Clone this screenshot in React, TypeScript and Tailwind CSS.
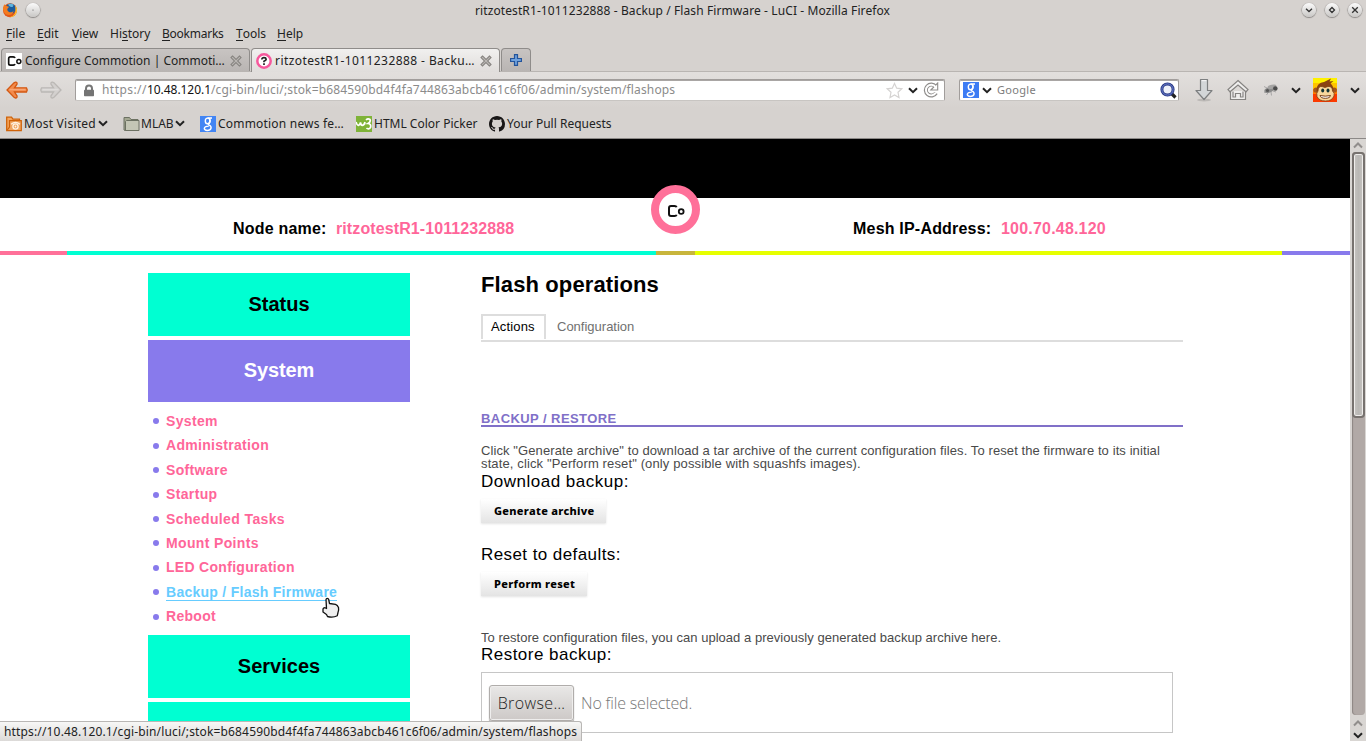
import React from 'react';

type Kids = { children: React.ReactNode };

const Chevron = ({ className = '' }: { className?: string }) => (
  <svg viewBox="0 0 10 7" className={`h-[7px] w-[10px] shrink-0 ${className}`} fill="none" stroke="#222" strokeWidth="2">
    <path d="M1 1.2 5 5.2 9 1.2" />
  </svg>
);

const Firefox = () => (
  <svg viewBox="0 0 16 16" className="size-4 shrink-0">
    <circle cx="8" cy="8.3" r="7" fill="#e2571a" />
    <circle cx="8.6" cy="6.6" r="5.2" fill="#1d5c9c" />
    <path d="M6 2.5c2-1.4 5-1 6.500 1-1.500-.5-2 .3-1.500 1.500-2 .3-3.500-.500-5-2.500z" fill="#5eb4de" />
    <path d="M1 6c.3-2 1-3 1.800-3.700.2 1 .8 1.500 1.600 1.700l2 .6c.8.400.300 1.200-.6 1.700C5 6.800 5 9 7 10c2 .8 3.500 0 4.500-1.300-.3 3-2 4.300-4.500 4.300C3 13 .8 9.500 1 6z" fill="#f47c20" />
    <path d="M13.300 3.500c2 2.500 2.300 6 .5 8.700-1.500 2.200-4 3.200-6.300 3 3.500-.8 6.200-3 6-7.200 0-1.600-.1-3-.2-4.500z" fill="#fdc830" />
  </svg>
);

const WindowButton = ({ children }: { children?: React.ReactNode }) => (
  <span className="flex size-[14px] items-center justify-center rounded-full bg-linear-to-b from-[#fbfbfb] to-[#c9c7c5] shadow-[0_0.5px_1px_0.5px_#8b8886]">
    <svg viewBox="0 0 14 14" className="size-[14px]" fill="none" stroke="#333" strokeWidth="1.300">{children}</svg>
  </span>
);

const Menu = ({ label, className }: { label: string; className: string }) => (
  <span className={className}>
    <span className="inline-block border-b border-[#222] leading-[12px]">{label[0]}</span>{label.slice(1)}
  </span>
);

const CommotionMark = ({ className = '' }: { className?: string }) => (
  <svg viewBox="0 0 18 14" className={className} fill="none" stroke="#111">
    <path d="M9.600 3.300Q9.200 2 7.500 2H4Q2 2 2 4V10Q2 12 4 12H7.500Q9.200 12 9.600 10.700" strokeWidth="2" />
    <circle cx="14.200" cy="7.500" r="2.400" strokeWidth="1.800" />
  </svg>
);

const TabClose = () => (
  <svg viewBox="0 0 12 12" className="size-3 shrink-0" fill="none">
    <path d="M2.500 2.500l7 7M9.500 2.500l-7 7" stroke="#85827f" strokeWidth="3.200" strokeLinecap="square" />
    <path d="M2.500 2.500l7 7M9.500 2.500l-7 7" stroke="#b8b5b2" strokeWidth="1.200" strokeLinecap="square" />
  </svg>
);

const HelpRing = () => (
  <svg viewBox="0 0 16 16" className="size-4 shrink-0" fill="none">
    <circle cx="8" cy="8" r="6.700" fill="#fff" stroke="#f6589c" strokeWidth="2.500" />
    <path d="M5.800 6.500Q6 4.700 8 4.700T10.200 6.300Q10.200 7.300 8 8.200V9.300M8 10.300V11.900" stroke="#222" strokeWidth="1.700" />
  </svg>
);

const BackArrow = ({ off }: { off?: boolean }) => (
  <svg viewBox="0 0 24 20" className={off ? 'h-5 w-6 -scale-x-100' : 'h-5 w-6'}>
    <path d="M10.500 2.200 Q12.500 2 12 4.200L9.500 7.800H21.500Q23 10 21.500 12H9.500L12 15.800Q12.500 18 10.500 18L9 17.300 2 10 9 2.800Z"
      fill={off ? '#d3d0ce' : '#f38b4c'} stroke={off ? '#bbb8b5' : '#d35812'} strokeWidth="1.300" />
    <path d="M4.500 9.600H20.500" stroke={off ? '#dedcda' : '#f7a677'} strokeWidth="1.500" />
  </svg>
);

const GoogleG = ({ className }: { className: string }) => (
  <svg viewBox="0 0 16 16" className={`size-4 shrink-0 ${className}`} fill="none" stroke="#fff">
    <ellipse cx="7.600" cy="4.900" rx="2.300" ry="2.800" strokeWidth="1.400" />
    <path d="M7.500 2H12M9.500 2.500Q11 5 9 7.200 7.500 8.400 9.300 9.200 11.500 10.300 11 12.300 10.300 14.500 7.300 14.500 4.300 14.300 4.300 12.300 4.500 10.200 8.800 10.100" strokeWidth="1.400" />
  </svg>
);

const Folder = () => (
  <svg viewBox="0 0 17 16" className="h-4 w-[17px] shrink-0" stroke="#6c7162">
    <path d="M1 14V1.500H6.500L8 3.500H15V14.500H2Z" fill="#a3a791" />
    <path d="M3.500 4.500H16V14.500H2.500V5.500Z" fill="#c4c6b5" />
  </svg>
);

const RssFolder = () => (
  <svg viewBox="0 0 16 16" className="size-4 shrink-0" fill="none" stroke="#cf6208">
    <path d="M.7 14.700V1.200H5.500L7 3.200H13.500V5" fill="#f5a55c" strokeWidth="1.300" />
    <path d="M3.500 4.700H15.300V14.700H.7L3.500 11Z" fill="#f0a45f" strokeWidth="1.200" />
    <path d="M5 8.200Q9.500 4.500 14 8.200" stroke="#fff2e2" strokeWidth="1.200" />
    <circle cx="9.500" cy="10.500" r="2.600" stroke="#fff2e2" strokeWidth="1.300" />
    <circle cx="9.500" cy="10.500" r=".9" fill="#fff2e2" stroke="none" />
  </svg>
);

const W3 = () => (
  <svg viewBox="0 0 16 16" className="size-4 shrink-0" fill="none">
    <rect width="16" height="16" fill="#7fb338" />
    <path d="M0 6Q1 9.500 2.500 9.300 4 9 4.500 6.500 5 9.500 6.500 9.300 8.500 9 9 6M10 4Q12 2 14 3.500 15 6 12 7.500 15.500 8 14.500 11.500 12.500 14 10.500 12" stroke="#fff" strokeWidth="1.700" />
  </svg>
);

const Github = () => (
  <svg viewBox="0 0 16 16" className="size-4 shrink-0" fill="#191717">
    <path d="M8 0C3.580 0 0 3.580 0 8c0 3.540 2.290 6.530 5.470 7.590.4.070.55-.17.55-.38v-1.490C4 14.090 3.480 13.220 3.320 12.770c-.09-.23-.48-.94-.82-1.130-.28-.15-.68-.52-.01-.53.63-.01 1.080.58 1.230.82.72 1.210 1.870.87 2.330.66.07-.52.280-.87.510-1.070-1.780-.2-3.640-.89-3.640-3.950 0-.87.310-1.590.82-2.150-.08-.2-.36-1.020.08-2.120 0 0 .67-.21 2.200.82a7.600 7.600 0 0 1 4 0c1.530-1.040 2.200-.82 2.200-.82.440 1.100.160 1.920.080 2.120.510.560.820 1.270.820 2.150 0 3.070-1.870 3.750-3.650 3.950.29.250.540.730.540 1.480v2.200c0 .21.150.46.550.38A8 8 0 0 0 16 8c0-4.420-3.580-8-8-8z" />
  </svg>
);

const Padlock = () => (
  <svg viewBox="0 0 12 13" className="h-[13px] w-3 shrink-0">
    <path d="M3 7V4.500Q3 1.500 6 1.500T9 4.500V7" fill="none" stroke="#777" strokeWidth="2" />
    <rect x="1" y="5.800" width="10" height="6.400" rx=".7" fill="#747474" />
  </svg>
);

const Star = () => (
  <svg viewBox="0 0 17 17" className="size-[17px]" fill="#fff" stroke="#d5d3d2" strokeWidth="1.200">
    <path d="M8.500 1.500 10.700 6.200 15.800 6.800 12 10.300 13 15.500 8.500 13 4 15.500 5 10.300 1.200 6.800 6.300 6.200Z" />
  </svg>
);

const Reload = () => (
  <svg viewBox="0 0 16 16" className="size-4" fill="none">
    <path d="M12.500 4.500A5.500 5.500 0 1 0 13 11" stroke="#8f8d8b" strokeWidth="4" />
    <path d="M14.700 1V8H7.800Z" fill="#fff" stroke="#8f8d8b" strokeWidth="1.100" />
    <path d="M12.500 4.900A5.300 5.300 0 1 0 12.800 10.800" stroke="#fff" strokeWidth="1.900" />
  </svg>
);

const Magnifier = () => (
  <svg viewBox="0 0 17 17" className="size-[17px]" fill="none">
    <path d="M11 11l4.500 4.500" stroke="#222" strokeWidth="3.200" />
    <circle cx="7.500" cy="7.500" r="5.600" fill="#eef1fa" stroke="#2b3a86" strokeWidth="3" />
    <circle cx="7.500" cy="7.500" r="5.600" stroke="#6d81cf" strokeWidth="1" />
  </svg>
);

const DownArrow = () => (
  <svg viewBox="0 0 20 24" className="h-6 w-5">
    <ellipse cx="10" cy="22" rx="7" ry="1.500" fill="#bcb9b6" />
    <path d="M6.500 1.500H13.500V12.500H18L10 21.500 2 12.500H6.500Z" fill="#d3d6d8" stroke="#7d7f80" strokeWidth="1.200" strokeLinejoin="round" />
    <path d="M7.700 2.700H12.300" stroke="#fafafa" />
  </svg>
);

const House = () => (
  <svg viewBox="0 0 22 22" className="size-[22px]" fill="#efeeed" stroke="#858381" strokeWidth="1.200">
    <path d="M3.500 12V20.500H18.500V12" />
    <path d="M11 1.500 21 10.500 19 12.800 11 6 3 12.800 1 10.500Z" />
    <path d="M6 12.500V18H8.500V14.500H13.500V18H16V12.500" fill="none" />
  </svg>
);

const Fly = () => (
  <svg viewBox="0 0 17 14" className="h-[14px] w-[17px]">
    <path d="M2 3.500 5 5M2 9.500 5 8M4.500 12 6.500 9M9.500 12.500 9 9M14 9 11 8" stroke="#999" strokeWidth=".8" fill="none" />
    <ellipse cx="7" cy="7" rx="4.800" ry="2.600" fill="#8b8b8b" transform="rotate(-20 7 7)" />
    <ellipse cx="10" cy="3.800" rx="4.500" ry="2" fill="#a5a4a3" transform="rotate(-12 10 3.800)" />
    <circle cx="13.300" cy="5.500" r="2.300" fill="#4c4c4c" />
    <circle cx="5.500" cy="7.500" r="1.600" fill="#555" />
  </svg>
);

const Monkey = () => (
  <svg viewBox="0 0 24 24" className="size-6">
    <rect width="24" height="24" fill="#fff100" />
    <rect y="5" width="24" height="19" fill="#ffc400" />
    <rect y="11" width="24" height="13" fill="#ff7a00" />
    <rect y="16" width="24" height="8" fill="#fb3a00" />
    <circle cx="3" cy="12" r="2.600" fill="#a5561c" />
    <circle cx="21.300" cy="12" r="2.600" fill="#a5561c" />
    <path d="M3.500 11Q4 5 11 4L18 .5 16.500 3.500 20.500 3 17.500 5.500Q21 8 20.500 14 20 21 12 21T3.500 13Z" fill="#8a4312" />
    <path d="M5 13Q5 8 9 8.500L12 9.500 15 8.500Q19.500 8 19.500 13 22 15 21 18 19 23 12.500 23T4 18.500Q3 15 5 13Z" fill="#f8d79c" stroke="#7a3d0f" strokeWidth=".8" />
    <ellipse cx="9.700" cy="12.500" rx="1.500" ry="2.100" fill="#133" />
    <ellipse cx="15" cy="12.500" rx="1.500" ry="2.100" fill="#133" />
    <path d="M7 17.500Q12.300 18.800 17.500 17.500 17 20.300 12.300 20.300T7 17.500Z" fill="#fff" stroke="#6a300c" strokeWidth=".9" />
  </svg>
);

const PointerHand = () => (
  <svg viewBox="0 0 20 22" className="h-[22px] w-5">
    <path d="M5 2.500Q5.200 1.300 6.300 1.300T7.700 2.500L8.500 6.500 14.500 7.300Q16.500 8 17.500 10.500 18 13 17 15.500L16.300 18.700Q12 21 6.500 19.500L5.500 17.500 2 15V12Q2.300 11 4 10.700L5.500 11.500Z"
      fill="#efefef" stroke="#111" strokeWidth="1.300" strokeLinejoin="round" />
  </svg>
);

const Bookmark = ({ children }: Kids) => <div className="flex items-center whitespace-nowrap">{children}</div>;

const subpages: [string, string][] = [
  ['System', 'tracking-[0.35px]'],
  ['Administration', 'tracking-[0.3px]'],
  ['Software', 'tracking-[0.35px]'],
  ['Startup', 'tracking-[0.35px]'],
  ['Scheduled Tasks', 'tracking-[0.38px]'],
  ['Mount Points', 'tracking-[0.35px]'],
  ['LED Configuration', 'tracking-[0.3px]'],
  ['Backup / Flash Firmware', 'tracking-[0.27px]'],
  ['Reboot', 'tracking-[0.3px]'],
];

const Chrome = () => (
  <header className="flex h-[139px] shrink-0 flex-col border-b border-[#8c8987] bg-[#d6d2cf] text-[12px] leading-4 text-[#222]">
    <div className="flex h-[22px] shrink-0 items-center pr-1 pl-[2px]">
      <div className="flex w-[473px] items-center gap-2 pb-[2px]">
        <Firefox />
        <WindowButton><circle cx="7" cy="7" r=".6" fill="#555" stroke="none" /></WindowButton>
      </div>
      <h1 className="flex-1 tracking-[0.1px] whitespace-nowrap">ritzotestR1-1011232888 - Backup / Flash Firmware - LuCI - Mozilla Firefox</h1>
      <div className="flex gap-[9px] pb-[3px]">
        <WindowButton><path d="M4 5.700 7 8.500 10 5.700" /></WindowButton>
        <WindowButton><path d="M7 4.500 9.500 7 7 9.500 4.500 7Z" /></WindowButton>
        <WindowButton><path d="M4.200 4.200l5.600 5.600M9.800 4.200l-5.600 5.600" /></WindowButton>
      </div>
    </div>
    <nav className="flex h-[26px] shrink-0 items-center pb-[2px] pl-[6px]">
      <Menu label="File" className="w-[31px]" />
      <Menu label="Edit" className="w-[35px]" />
      <Menu label="View" className="w-[38px]" />
      <span className="w-[52px]">Hi<span className="inline-block border-b border-[#222] leading-[12px]">s</span>tory</span>
      <Menu label="Bookmarks" className="w-[74px] tracking-[-0.25px]" />
      <Menu label="Tools" className="w-[41px]" />
      <Menu label="Help" className="" />
    </nav>
    <div className="flex h-6 shrink-0 gap-px border-b border-[#b9b5b2] pl-px">
      <div className="flex w-[249px] items-center rounded-t-[4px] border border-b-0 border-[#8f8c8a] bg-linear-to-b from-[#c8c4c2] to-[#b9b5b3] pt-px pl-1">
        <span className="flex size-4 shrink-0 items-center justify-center bg-white"><CommotionMark className="h-[12px] w-[15px]" /></span>
        <span className="w-[208px] pl-[3px] whitespace-nowrap">Configure Commotion | Commoti…</span>
        <TabClose />
      </div>
      <div className="-mb-px flex w-[249px] items-center rounded-t-[4px] border border-b-0 border-[#8f8c8a] bg-linear-to-b from-[#f1f0ef] to-[#e0dddb] pl-1">
        <HelpRing />
        <span className="w-[208px] pl-[3px] tracking-[0.42px] whitespace-nowrap">ritzotestR1-1011232888 - Backu…</span>
        <TabClose />
      </div>
      <div className="flex w-[30px] items-center justify-center rounded-t-[4px] border border-b-0 border-[#8f8c8a] bg-linear-to-b from-[#c8c4c2] to-[#b9b5b3]">
        <svg viewBox="0 0 12 12" className="size-3"><path d="M4.500.6H7.500V4.500H11.400V7.500H7.500V11.400H4.500V7.500H.6V4.500H4.500Z" fill="#6fa1dc" stroke="#24549b" strokeWidth="1.200" /></svg>
      </div>
    </div>
    <div className="flex h-9 shrink-0 items-center bg-linear-to-b from-[#e2dfdd] to-[#d6d2cf] pl-[5px]">
      <div className="flex w-[70px] gap-[10px]"><BackArrow /><BackArrow off /></div>
      <div className="flex h-[22px] w-[870px] items-center rounded-[2px] border border-[#a19d9b] border-b-[#c8c5c2] bg-white pl-[7px] shadow-[inset_0_1px_0_#a9a6a4]">
        <Padlock />
        <div className="w-[785px] pl-[7px] whitespace-nowrap text-[#8b8b8b]">
          <span className="tracking-[0.45px]">https://</span>
          <span className="tracking-[-0.05px] text-[#111]">10.48.120.1</span>
          <span className="tracking-[0.155px]">/cgi-bin/luci/;stok=b684590bd4f4fa744863abcb461c6f06/admin/system/flashops</span>
        </div>
        <div className="flex flex-1 items-center gap-[5px] pl-[6px]"><Star /><Chevron /><Reload /></div>
      </div>
      <div className="ml-[14px] flex h-[22px] w-[220px] items-center rounded-[2px] border border-[#a19d9b] border-b-[#c8c5c2] bg-white pl-[3px] shadow-[inset_0_1px_0_#a9a6a4]">
        <GoogleG className="bg-[#3d7cf4]" />
        <Chevron className="ml-[3px]" />
        <span className="flex-1 pl-[5px] text-[11px] tracking-[0.3px] text-[#7c7c7c]">Google</span>
        <span className="pr-px"><Magnifier /></span>
      </div>
      <div className="flex flex-1 items-center pl-[15px]">
        <DownArrow />
        <span className="ml-[13px]"><House /></span>
        <span className="ml-[13px]"><Fly /></span>
        <Chevron className="ml-[12px]" />
        <span className="ml-[12px]"><Monkey /></span>
        <Chevron className="ml-[13px]" />
      </div>
    </div>
    <div className="flex flex-1 items-center pt-px pl-[6px]">
      <Bookmark><RssFolder /><span className="w-[76px] pl-[2px] tracking-[0.25px]">Most Visited</span><Chevron /></Bookmark>
      <span className="w-[15px]" />
      <Bookmark><Folder /><span className="w-[35px] pl-px">MLAB</span><Chevron /></Bookmark>
      <span className="w-[15px]" />
      <Bookmark><GoogleG className="bg-[#4285f4]" /><span className="w-[140px] pl-[2px] tracking-[0.2px]">Commotion news fe…</span></Bookmark>
      <Bookmark><W3 /><span className="w-[117px] pl-[2px]">HTML Color Picker</span></Bookmark>
      <Bookmark><Github /><span className="pl-[2px]">Your Pull Requests</span></Bookmark>
    </div>
  </header>
);

const Scrollbar = () => (
  <div className="flex w-4 shrink-0 flex-col items-center bg-[#d9d6d3]">
    <div className="flex h-[13px] items-center"><svg viewBox="0 0 10 7" className="h-[7px] w-[10px]" fill="none" stroke="#918e8c" strokeWidth="2"><path d="M1 5.500 5 1.500 9 5.500" /></svg></div>
    <div className="flex w-[13px] flex-1 flex-col rounded-[4px] bg-[#b1a9a6] shadow-[inset_1px_0_1px_#8d8683]">
      <div className="h-[266px] rounded-[4px] border-2 border-[#77726f] bg-linear-to-r from-[#c6c4c1] via-[#b9b7b4] to-[#c6c4c1] shadow-[inset_0_0_0_1px_#efedeb]" />
    </div>
    <div className="flex h-[26px] flex-col items-center justify-around pt-[2px]">
      <svg viewBox="0 0 10 7" className="h-[7px] w-[10px]" fill="none" stroke="#918e8c" strokeWidth="2"><path d="M1 5.500 5 1.500 9 5.500" /></svg>
      <Chevron />
    </div>
  </div>
);

const SideBlock = ({ label, className }: { label: string; className: string }) => (
  <div className={`flex shrink-0 items-center justify-center text-[20px] font-bold ${className}`}>{label}</div>
);

const ActionButton = ({ label, className }: { label: string; className: string }) => (
  <button className={`block h-[24px] bg-linear-to-b from-white to-[#e4e4e4] pl-[13px] text-left text-[11px] leading-[24px] font-extrabold text-black shadow-[0_1px_2px_#e3e3e3] font-['Noto_Sans',sans-serif] ${className}`}>{label}</button>
);

export default function App() {
  return (
    <div className="relative flex h-[741px] w-[1366px] flex-col overflow-hidden bg-white font-['Noto_Sans',sans-serif]">
      <Chrome />
      <div className="flex min-h-0 flex-1">
        <div className="flex w-[1350px] flex-col overflow-hidden bg-white font-['Liberation_Sans',Arial,sans-serif]">
          <div className="h-[59px] shrink-0 bg-black" />
          <div className="relative flex h-[53px] shrink-0 items-start pt-[19px] text-[16px] leading-6 font-bold whitespace-nowrap text-black">
            <span className="ml-[233px] w-[103px] tracking-[0.2px]">Node name:</span>
            <span className="w-[517px] tracking-[0.1px] text-[#ff6699]">ritzotestR1-1011232888</span>
            <span className="w-[148px] tracking-[0.2px]">Mesh IP-Address:</span>
            <span className="tracking-[0.2px] text-[#ff6699]">100.70.48.120</span>
            <div className="absolute -top-[13px] left-[651px] flex size-[49px] items-center justify-center rounded-full border-8 border-[#ff7099] bg-white">
              <CommotionMark className="mt-[2px] h-[14px] w-[18px]" />
            </div>
          </div>
          <div className="flex h-1 shrink-0">
            <div className="w-[67px] bg-[#ff7099]" />
            <div className="w-[589px] bg-[#00ffd2]" />
            <div className="w-[39px] bg-[#c8b53c]" />
            <div className="w-[587px] bg-[#e6ff00]" />
            <div className="flex-1 bg-[#887aec]" />
          </div>
          <div className="flex min-h-0 flex-1 pt-[18px] pl-[148px]">
            <aside className="flex w-[262px] shrink-0 flex-col text-black">
              <SideBlock label="Status" className="h-[63px] bg-[#00ffd2] pb-[2px]" />
              <SideBlock label="System" className="mt-1 h-[62px] bg-[#887aec] pb-[2px] tracking-[-0.1px] text-white" />
              <ul className="h-[233px] shrink-0 pt-[7.300px] text-[14px] font-bold text-[#ff6699]">
                {subpages.map(([label, tracking]) => (
                  <li key={label} className="flex h-[24.4px] items-center gap-[7px] pl-[5px]">
                    <span className="size-[6px] rounded-full bg-[#887aec]" />
                    <span className={label.startsWith('Backup') ? `mt-px border-b border-[#66ccff] leading-[15px] text-[#66ccff] ${tracking}` : tracking}>{label}</span>
                  </li>
                ))}
              </ul>
              <SideBlock label="Services" className="h-[63px] bg-[#00ffd2] pb-[2px]" />
              <div className="mt-1 h-[63px] shrink-0 bg-[#00ffd2]" />
            </aside>
            <main className="ml-[71px] w-[702px] shrink-0 text-[13px] whitespace-nowrap text-[#4a4a4a]">
              <h2 className="text-[22px] leading-6 font-bold tracking-[0.12px] text-black">Flash operations</h2>
              <div className="mt-[17px] flex h-[28px] border-b-2 border-[#ddd]">
                <div className="h-[25px] w-[65px] border-2 border-b-0 border-[#ddd] pl-2 leading-[21px] tracking-[0.15px] text-black">Actions</div>
                <div className="pl-[11px] leading-[25px] text-[#707070]">Configuration</div>
              </div>
              <h3 className="mt-[71px] border-b-2 border-[#8070c8] text-[13px] leading-[12px] font-bold tracking-[0.43px] text-[#8070c8]">BACKUP / RESTORE</h3>
              <p className="mt-[17px] leading-[13px]">
                <span className="block tracking-[0.095px]">Click &quot;Generate archive&quot; to download a tar archive of the current configuration files. To reset the firmware to its initial</span>
                <span className="block tracking-[0.13px]">state, click &quot;Perform reset&quot; (only possible with squashfs images).</span>
              </p>
              <div className="text-[17px] leading-6 tracking-[0.5px] text-black">Download backup:</div>
              <ActionButton label="Generate archive" className="mt-[5px] w-[125px] tracking-[0.3px]" />
              <div className="mt-[20px] text-[17px] leading-6 tracking-[0.42px] text-black">Reset to defaults:</div>
              <ActionButton label="Perform reset" className="mt-[5px] w-[106px] tracking-[0.3px]" />
              <p className="mt-[35px] leading-[13px] tracking-[0.03px]">To restore configuration files, you can upload a previously generated backup archive here.</p>
              <div className="text-[17px] leading-[22px] tracking-[0.48px] text-black">Restore backup:</div>
              <div className="mt-[6px] flex h-[61px] w-[692px] items-center border border-[#c6c6c6] pl-[7px] text-[16px] font-light font-['Open_Sans',sans-serif]">
                <button className="h-[36px] w-[85px] rounded-[3px] border border-[#b0adab] bg-linear-to-b from-[#e9e8e7] to-[#cdc9c7] text-[16px] font-light tracking-[0.4px] text-[#222] shadow-[0_1px_1px_#8f8c8a,inset_0_0_0_1px_#efeeed]">Browse…</button>
                <span className="pl-[7px] tracking-[-0.16px] text-[#777]">No file selected.</span>
              </div>
            </main>
          </div>
        </div>
        <Scrollbar />
      </div>
      <div className="absolute bottom-0 left-0 flex h-5 w-[582px] items-center rounded-tr-[3px] border-t border-r border-[#b9b7b5] bg-linear-to-b from-[#f7f7f6] to-[#dcdad8] pt-px pl-1 text-[12px] whitespace-nowrap text-[#222]">
        <span className="tracking-[0.155px]">https://10.48.120.1/cgi-bin/luci/;stok=b684590bd4f4fa744863abcb461c6f06/admin/system/flashops</span>
      </div>
      <div className="absolute top-[597px] left-[321px]"><PointerHand /></div>
    </div>
  );
}
